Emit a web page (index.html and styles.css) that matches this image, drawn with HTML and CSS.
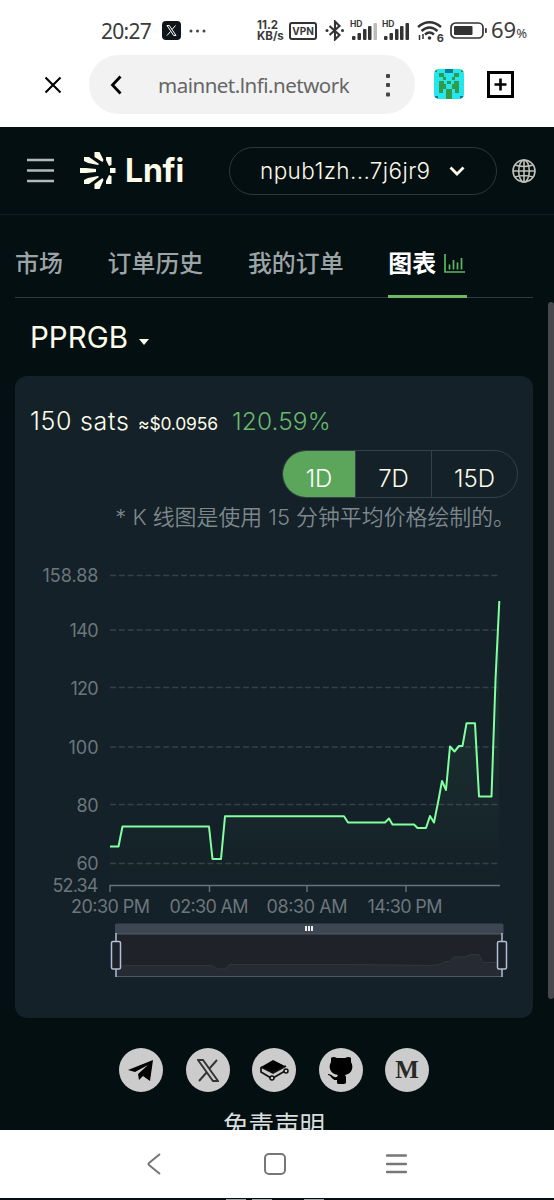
FILE: index.html
```html
<!DOCTYPE html>
<html lang="zh-CN">
<head>
  <meta charset="UTF-8">
  <title>Lnfi</title>
  <link rel="stylesheet" href="styles.css">
</head>
<body>
  <div class="statusbar">
    <span class="time">20:27</span>
    <svg class="app-x" width="19" height="19" viewBox="0 0 19 19"><rect width="19" height="19" rx="4" fill="#10151a"/><path d="M5 4.500h2.300l6.700 10h-2.300zM13.500 4.500L10 8.500M8.500 10.500L5 14.500" fill="none" stroke="#fff" stroke-width="1"/></svg>
    <svg class="dots" width="17" height="4" viewBox="0 0 17 4" fill="#444"><circle cx="2" cy="2" r="1.500"/><circle cx="8.500" cy="2" r="1.500"/><circle cx="15" cy="2" r="1.500"/></svg>
    <span class="speed">11.2<br>KB/s</span>
    <span class="vpn">VPN</span>
    <svg class="bt" width="20" height="21" viewBox="0 0 20 21"><path d="M4.500 6L14.500 15L10 19.500V1.500L14.500 6L4.500 15" fill="none" stroke="#333" stroke-width="2.100"/><circle cx="2" cy="10.500" r="1.500" fill="#333"/><circle cx="17.500" cy="10.500" r="1.500" fill="#333"/></svg>
    <div class="signal">
      <span>HD</span>
      <svg width="27" height="17" viewBox="0 0 27 17" fill="#333"><rect x="1" y="13" width="3.500" height="4" rx="1"/><rect x="6.500" y="10" width="3.500" height="7" rx="1"/><rect x="12" y="6" width="3.500" height="11" rx="1"/><rect x="17" y="3" width="3.500" height="14" rx="1"/><rect x="22.500" y="0" width="3.500" height="17" rx="1" fill="#bbb"/></svg>
    </div>
    <div class="signal">
      <span>HD</span>
      <svg width="27" height="17" viewBox="0 0 27 17" fill="#333"><rect x="1" y="13" width="3.500" height="4" rx="1"/><rect x="6.500" y="10" width="3.500" height="7" rx="1"/><rect x="12" y="6" width="3.500" height="11" rx="1"/><rect x="17" y="3" width="3.500" height="14" rx="1"/><rect x="22.500" y="0" width="3.500" height="17" rx="1"/></svg>
    </div>
    <div class="wifi">
      <svg width="26" height="20" viewBox="0 0 26 20" fill="none" stroke="#333" stroke-width="2.400"><path d="M1 6Q12.500 -3.500 24 6M4.500 10Q12.500 3 20.500 10M8 13.500Q12.500 9.500 17 13.500"/><circle cx="12.500" cy="17" r="1.800" fill="#333" stroke="none"/><path d="M2.500 14v5M6 13v5" stroke-width="1.500"/></svg>
      <span>6</span>
    </div>
    <svg class="battery" width="37" height="17" viewBox="0 0 37 17"><rect x="1" y="1" width="32" height="15" rx="4.500" fill="none" stroke="#333" stroke-width="1.700"/><rect x="4" y="4" width="18.500" height="9" rx="1" fill="#333"/><rect x="35" y="6" width="1.800" height="5" rx=".8" fill="#333"/></svg>
    <span class="percent">69<small>%</small></span>
  </div>

  <div class="browserbar">
    <svg class="close" width="18" height="18" viewBox="0 0 18 18"><path d="M1.500 1.500L16.500 16.500M16.500 1.500L1.500 16.500" stroke="#000" stroke-width="2.100"/></svg>
    <div class="address">
      <svg width="12" height="20" viewBox="0 0 12 20"><path d="M10.500 1.500L2.500 10L10.500 18.500" fill="none" stroke="#000" stroke-width="2.800"/></svg>
      <span>mainnet.lnfi.network</span>
      <svg width="4" height="24" viewBox="0 0 4 24" fill="#444"><rect y="1" width="4" height="4" rx="1"/><rect y="10" width="4" height="4" rx="1"/><rect y="19.500" width="4" height="4" rx="1"/></svg>
    </div>
    <svg class="avatar" width="30" height="30" viewBox="0 0 30 30">
      <clipPath id="round"><rect width="30" height="30" rx="5"/></clipPath>
      <g clip-path="url(#round)"><rect width="30" height="30" fill="#25e5ee"/>
      <path fill="#329b49" d="M5 4h5v4h10V4h5v4h-4v3h-3v-3h-6v3h-3V8H5zM5 12h5v3h3v-3h4v3h3v-3h5v12h-4v-4h-3v3h-6v-3H9v4H5zM12 23h6v7h-6zM0 0h3v3H0zM27 0h3v3h-3z"/>
      <path fill="#25e5ee" d="M12 15h6v5h-6z"/><path fill="#087d96" d="M11 0h8v4h-8zM0 27h4v3H0zM26 27h4v3h-4z"/></g>
    </svg>
    <svg class="newtab" width="27" height="27" viewBox="0 0 27 27" fill="none" stroke="#000" stroke-width="3"><rect x="1.500" y="1.500" width="24" height="24"/><path d="M7.500 13.500h12M13.500 7.500v12" stroke-width="2.600"/></svg>
  </div>

  <main>
    <header>
      <svg class="burger" width="27" height="25" viewBox="0 0 27 25" stroke="#b3b9ba" stroke-width="2.600"><path d="M0 2h27M0 12.500h27M0 23h27"/></svg>
      <svg class="mark" width="36" height="37" viewBox="0 0 36 37" fill="#fdfce8"><path d="M0 16h6l10 1v3L6 21H0zM4 5h5l10 7-1 1-10-2-4-2zM14.500 0h5l4 8-1 2-8-5zM26 5h5.500v8L29 14l-3-6zM30 16h5.500v5H30zM31.500 24v8H26v-3l3-6zM4 32v-4l4-2 10-2 1 1-10 7zM14.500 37v-5l8-6 1 2-4 9z"/></svg>
      <span class="brand">Lnfi</span>
      <div class="account">
        <span>npub1zh...7j6jr9</span>
        <svg width="16" height="10" viewBox="0 0 16 10"><path d="M1.500 1.500L8 8L14.500 1.500" fill="none" stroke="#fff9e9" stroke-width="2.800"/></svg>
      </div>
      <svg class="globe" width="24" height="24" viewBox="0 0 24 24" fill="none" stroke="#bfc0b8" stroke-width="1.600"><circle cx="12" cy="12" r="11"/><ellipse cx="12" cy="12" rx="5.300" ry="11"/><path d="M12 1v22M1 12h22M3 6q9 3 18 0M3 18q9-3 18 0"/></svg>
    </header>

    <nav class="tabs">
      <a>市场</a>
      <a>订单历史</a>
      <a>我的订单</a>
      <a class="active">图表
        <svg width="21" height="19" viewBox="0 0 21 19" fill="none" stroke="#5fb663" stroke-width="1.700"><path d="M1 0v18h20M5.500 15.500v-5M9.500 15.500V6M13.500 15.500V8.500M17.500 15.500V4"/></svg>
      </a>
    </nav>

    <div class="token">PPRGB <i class="caret"></i></div>

    <section class="card">
      <div class="price">
        <span class="sats">150 sats</span>
        <span class="usd">≈$0.0956</span>
        <span class="change">120.59%</span>
      </div>
      <div class="range">
        <button class="on">1D</button>
        <button>7D</button>
        <button>15D</button>
      </div>
      <p class="note">* K 线图是使用 15 分钟平均价格绘制的。</p>
      <svg class="chart" width="518" height="440" viewBox="15 550 518 440">
        <defs>
          <linearGradient id="area" x1="0" y1="601" x2="0" y2="885" gradientUnits="userSpaceOnUse"><stop offset="0" stop-color="#84ff9f" stop-opacity=".1"/><stop offset="1" stop-color="#84ff9f" stop-opacity="0"/></linearGradient>
        </defs>
        <path class="grid" d="M110 575.500H499M110 630H499M110 687.500H499M110 747H499M110 804.500H499M110 863.500H499"/>
        <g class="ylabels">
          <text x="98.500" y="582" textLength="56">158.88</text>
          <text x="98.500" y="637" textLength="29">140</text>
          <text x="98.500" y="695" textLength="28">120</text>
          <text x="98.500" y="753.500" textLength="30">100</text>
          <text x="98.500" y="811.500" textLength="22">80</text>
          <text x="98.500" y="870" textLength="22">60</text>
          <text x="98.500" y="892" textLength="46">52.34</text>
        </g>
        <path fill="url(#area)" d="M110 846.500H118.500L122.500 826.500H209L212.500 859H221L225 816.300H344L348 822.500H385L389 818.500L392.500 824.500H414L417.500 828H426L430 816L434 822.500L442 781L446 790L450 746.500L454.500 751.500L459 746H462.500L466.500 723.300H475L479 796.500H491.500L499.300 601V885H110z"/>
        <path class="axis" d="M110 892V885.500H500M209.500 885.500V892M307 885.500V892M406 885.500V892"/>
        <path class="line" d="M110 846.500H118.500L122.500 826.500H209L212.500 859H221L225 816.300H344L348 822.500H385L389 818.500L392.500 824.500H414L417.500 828H426L430 816L434 822.500L438.500 800L442 781L446 790L450 746.500L454.500 751.500L459 746H462.500L466.500 723.300H475L479 796.500H491.500L495.500 680L499.300 601"/>
        <g class="xlabels">
          <text x="110.500" y="913" textLength="79">20:30 PM</text>
          <text x="209" y="913" textLength="79">02:30 AM</text>
          <text x="307" y="913" textLength="81">08:30 AM</text>
          <text x="405" y="913" textLength="75">14:30 PM</text>
        </g>

        <path fill="#3c4753" d="M115 934v-9q0-1.500 1.500-1.500H502q1.500 0 1.500 1.500v9z"/>
        <rect x="116" y="934" width="386" height="43" fill="#20222a"/>
        <path fill="#252a33" d="M116 966H122L128 965.500H211L218 969H225L230 964.500H350L432 965.500L441 964L445 961.500H450L454 957H465L471 954.500H479L483 962.500H497L502 950V977H116z"/>
        <path d="M116 966H122L128 965.500H211L218 969H225L230 964.500H350L432 965.500L441 964L445 961.500H450L454 957H465L471 954.500H479L483 962.500H497" fill="none" stroke="#30363f"/>
        <path d="M116 934H502M116 976.500H502" stroke="#4d5a63"/>
        <path d="M306 926v5M309 926v5M312 926v5" stroke="#fff" stroke-width="1.800"/>
        <g class="handle"><path d="M116 933V977M502 933V977"/><rect x="111.500" y="941.500" width="9" height="27.500" rx="1.500"/><rect x="497.500" y="941.500" width="9" height="27.500" rx="1.500"/></g>
      </svg>
    </section>

    <div class="social">
      <a><svg width="26" height="23" viewBox="0 0 26 23"><path d="M0 11L25 1L22 22L15 17L11 21L10 15L20 6L7 13z"/></svg></a>
      <a><svg width="22" height="23" viewBox="0 0 22 23" fill="none" stroke="#333" stroke-width="1.900"><path d="M1 1h5l15 21h-5zM20 1l-8 9M10 13l-8 9"/></svg></a>
      <a><svg width="30" height="22" viewBox="0 0 30 22"><path d="M2 8L14 1L26 7L14 14z"/><path d="M2 8v5l10 6M14 19l12-7M2 8l12 6L27 7" fill="none" stroke="#111" stroke-width="1.700"/><g fill="#ccc" stroke="#111" stroke-width="1.500"><circle cx="13" cy="19" r="2"/><circle cx="27" cy="12" r="2"/></g></svg></a>
      <a><svg width="26" height="28" viewBox="0 0 26 28"><path d="M3 2q2-2 6 0h8q4-2 6 0v4c3 5 1 12-6 13q1 1 1 3v5q-1 1-2 1h-5q-2 0-2-1v-3c-5 1-6-5-9-5v-1c4 0 5 4 9 3l1-2C2 18 0 11 3 6z"/></svg></a>
      <a class="medium">M</a>
    </div>
    <div class="disclaimer">免责声明</div>
    <div class="scrollbar"></div>
  </main>

  <div class="navbar">
    <svg width="14" height="22" viewBox="0 0 14 22"><path d="M13 1L2 10Q1 11 2 12L13 21" fill="none" stroke="#777" stroke-width="2"/></svg>
    <svg width="22" height="22" viewBox="0 0 22 22"><rect x="1" y="1" width="20" height="20" rx="4" fill="none" stroke="#777" stroke-width="2"/></svg>
    <svg width="21" height="20" viewBox="0 0 21 20"><path d="M1 1.500h19M1 10h19M1 18h19" stroke="#777" stroke-width="2.400" stroke-linecap="round"/></svg>
  </div>
  <div class="strip"><i></i><i></i><i></i><i></i></div>
</body>
</html>
```
FILE: styles.css
```css
* { box-sizing: border-box; }
body { margin: 0; width: 554px; height: 1200px; overflow: hidden; background: #fff; font-family: Inter, "Noto Sans CJK SC", sans-serif; }
svg { display: block; flex: none; }

.statusbar { height: 55px; padding: 6px 0 0 101px; display: flex; align-items: center; color: #3b3b3b; white-space: nowrap; }
.time { width: 61px; font: 21px "Noto Sans", sans-serif; letter-spacing: -0.7px; }
.dots { margin-left: 8px; }
.speed { width: 32px; margin-left: 51px; font: bold 11.5px/11px Inter, sans-serif; }
.vpn { width: 28px; height: 18px; border: 2px solid #333; border-radius: 3px; font: bold 10px/14px Inter, sans-serif; text-align: center; }
.bt { margin-left: 8px; }
.signal { position: relative; width: 27px; margin-left: 5px; padding-top: 1px; }
.bt + .signal { margin-left: 6px; }
.signal span { position: absolute; left: -1px; top: -2px; font: bold 8.5px/8px Inter, sans-serif; }
.wifi { position: relative; margin-left: 7px; }
.wifi span { position: absolute; right: -1px; bottom: -3px; background: #fff; font: bold 11px/11px Inter, sans-serif; }
.battery { margin-left: 7px; }
.percent { margin: -3px 0 0 4px; font: 22px "Noto Sans", sans-serif; }
.percent small { font-size: 13px; }

.browserbar { height: 72px; display: flex; align-items: flex-start; }
.close { margin: 21px 0 0 44px; }
.address { width: 326px; height: 59px; margin-left: 27px; padding: 0 25px 0 21px; border-radius: 30px; background: #f2f2f2; display: flex; align-items: center; }
.address span { flex: 1; margin-left: 36px; color: #666; font: 20.5px "Noto Sans", sans-serif; letter-spacing: -0.5px; white-space: nowrap; }
.avatar { margin: 14px 0 0 19px; }
.newtab { margin: 16px 0 0 23px; }

main { position: relative; height: 1003px; overflow: hidden; background: #040f12; }
header { height: 88px; border-bottom: 1px solid #142024; display: flex; align-items: center; }
.burger { margin-left: 27px; }
.mark { margin: 0 0 0 26px; }
.brand { width: 60px; margin-left: 9px; color: #fdfce8; font-size: 32px; font-weight: 700; letter-spacing: -0.2px; }
.account { width: 268px; height: 48px; margin-left: 44px; padding: 0 31px 0 30px; border: 1px solid #2b3739; border-radius: 24px; display: flex; align-items: center; justify-content: space-between; color: #fff9e9; font-size: 22.5px; font-weight: 300; letter-spacing: 0.4px; }
.globe { margin-left: 15px; }

.tabs { height: 83px; margin: 0 21px 0 15px; border-bottom: 1px solid #303b3e; display: flex; gap: 44.8px; font-size: 23.9px; font-weight: 500; color: #9ca4a6; }
.tabs a { height: 83px; padding-top: 14px; line-height: 70px; white-space: nowrap; }
.tabs .active { display: flex; gap: 8px; padding-right: 2px; border-bottom: 3px solid #6cb966; color: #fff; font-weight: 700; }
.tabs svg { margin-top: 25px; }

.token { height: 78px; padding-left: 30px; display: flex; align-items: center; gap: 11px; color: #fdfce8; font-size: 29.5px; }
.caret { margin-top: 9px; border: 5.5px solid transparent; border-top: 6px solid #fdfce8; border-bottom: 0; }

.card { width: 518px; height: 642px; margin-left: 15px; border-radius: 12px; background: #142128; overflow: hidden; }
.price { height: 74px; padding: 30px 15px 0; display: flex; align-items: baseline; color: #fdfce8; white-space: nowrap; }
.sats { width: 108px; font-size: 25px; font-weight: 300; letter-spacing: 0.7px; }
.usd { width: 94px; font-size: 17.5px; font-weight: 400; letter-spacing: -0.2px; }
.change { color: #68b96d; font-size: 24.5px; font-weight: 300; letter-spacing: 0.1px; }
.range { width: 236px; height: 48px; margin-left: 267px; border: 1px solid #354148; border-radius: 24px; display: flex; overflow: hidden; }
.range button { width: 76px; padding: 8px 0 0; border: 0; border-left: 1px solid #354148; background: none; color: #fdfce8; font: 300 24px Inter, sans-serif; }
.range .on { width: 72px; border: 0; background: #5ca65c; color: #fff; }
.range button:last-child { flex: 1; }
.note { height: 52px; margin: 0 18px 0 0; color: #7e888d; font-size: 21.9px; font-weight: 350; line-height: 39px; text-align: right; white-space: nowrap; }
.chart text { fill: #6c767d; font-size: 18px; font-family: Inter, sans-serif; }
.ylabels { text-anchor: end; }
.xlabels { text-anchor: middle; }
.grid { stroke: #344148; stroke-width: 1.4; stroke-dasharray: 6 2.87; }
.axis { fill: none; stroke: #68737a; stroke-width: 1.4; }
.line { fill: none; stroke: #82ff9e; stroke-width: 2; stroke-linejoin: round; }
.handle { fill: #1d222a; stroke: #b2bed5; stroke-width: 1.5; }

.social { margin: 30px 0 0 119px; display: flex; gap: 22.500px; }
.social a { width: 44px; height: 44px; border-radius: 50%; background: #ccc; display: flex; align-items: center; justify-content: center; }
.social .medium { color: #292929; font: bold 25px "Liberation Serif", serif; }
.disclaimer { margin: 14px 0 0 223px; color: #d9dddd; font-size: 25.500px; line-height: 38px; white-space: nowrap; }
.scrollbar { position: absolute; right: 0; top: 175px; width: 6px; height: 697px; border-radius: 3px; background: #48494c; }

.navbar { position: relative; height: 68px; background: #fff; display: flex; align-items: center; padding-left: 147px; }
.navbar svg + svg { margin-left: 103px; }
.navbar svg:last-child { margin-left: 100px; }
/* sliver of page showing below the nav bar */
.strip { height: 2px; padding: 1px 0 0 226px; background: #040f12; display: flex; gap: 6px; }
.strip i { width: 20px; height: 1px; background: #9da3a4; }
.strip i:nth-child(3) { visibility: hidden; }
```
